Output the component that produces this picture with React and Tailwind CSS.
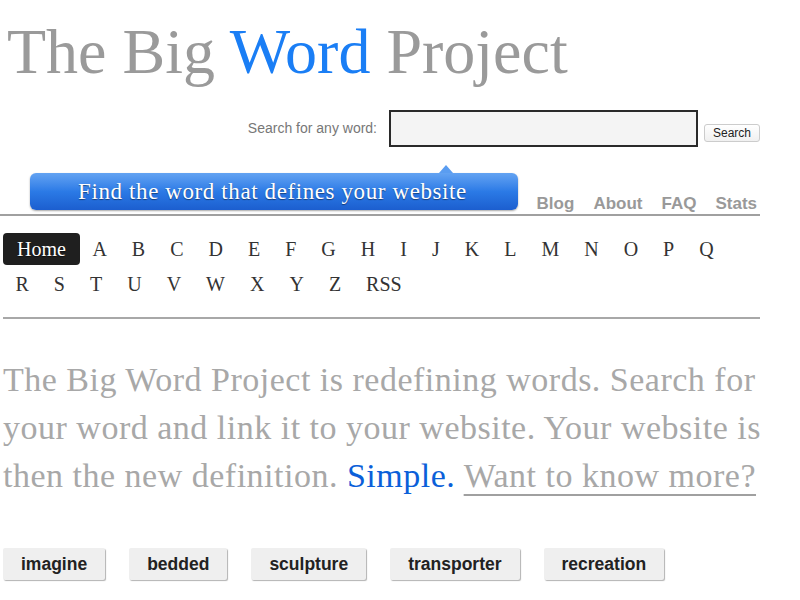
const letters1 = ['A', 'B', 'C', 'D', 'E', 'F', 'G', 'H', 'I', 'J', 'K', 'L', 'M', 'N', 'O', 'P', 'Q'];
const letters2 = ['R', 'S', 'T', 'U', 'V', 'W', 'X', 'Y', 'Z', 'RSS'];
const words = ['imagine', 'bedded', 'sculpture', 'transporter', 'recreation'];

const serif = "font-['Liberation_Serif','Times_New_Roman',serif]";
const sans = "font-['Liberation_Sans',Arial,sans-serif]";

function Letter({ children }) {
  return (
    <a href="#" className="px-[12.5px] text-[20px] leading-[32px] text-[#333]">
      {children}
    </a>
  );
}

export default function App() {
  return (
    <div className={`w-[800px] h-[600px] bg-white overflow-hidden ${serif}`}>
      <div className="w-[760px]">
        {/* logo */}
        <h1 className="pt-[20px] pl-[7px] text-[64px] leading-[64px] text-[#9a9a9a] whitespace-nowrap">
          The Big <span className="text-[#1a7ef5]">Word</span> Project
        </h1>

        {/* search */}
        <div className="mt-[26px] flex items-center justify-end">
          <span className={`${sans} text-[14px] text-[#777] mr-[12px]`}>Search for any word:</span>
          <input className="w-[309px] h-[37px] border-2 border-[#2a2a2a] bg-[#f4f4f4] outline-none" />
          <button
            className={`${sans} ml-[6px] mt-[8px] w-[56px] h-[18px] text-[12px] leading-[16px] text-[#222] border border-[#ccc] rounded-[3px] bg-linear-to-b from-white to-[#f0f0f0]`}
          >
            Search
          </button>
        </div>

        {/* banner + nav */}
        <div className="mt-[26px] flex items-end justify-between">
          <div className="relative ml-[30px] w-[488px] h-[37px] rounded-[6px] bg-linear-to-b from-[#63a3f2] via-[#2b7ae6] to-[#1c5ecf] shadow-[0_1px_2px_rgba(0,0,0,0.35)] flex items-center justify-center">
            <span className="absolute -top-[8px] left-[409px] w-0 h-0 border-x-[7px] border-x-transparent border-b-[8px] border-b-[#5a9df1]" />
            <span className="text-white text-[23px] tracking-[0.6px] leading-none [text-shadow:0_1px_1px_rgba(0,0,0,0.45)] -ml-[3px]">
              Find the word that defines your website
            </span>
          </div>
          <nav className={`${sans} flex gap-[19px] font-bold text-[17px] leading-[20px] text-[#999] pr-[3px] -mb-[4px]`}>
            <a href="#">Blog</a>
            <a href="#">About</a>
            <a href="#">FAQ</a>
            <a href="#">Stats</a>
          </nav>
        </div>
        <div className="mt-[4px] h-[2px] bg-[#a0a0a0]" />

        {/* alphabet */}
        <div className="mt-[17px] pl-[3px]">
          <div className="flex items-center h-[32px]">
            <a
              href="#"
              className="px-[14px] h-[32px] rounded-[4px] bg-[#1f1f1f] text-white text-[20px] leading-[32px] [text-shadow:0_1px_1px_rgba(0,0,0,0.6)]"
            >
              Home
            </a>
            {letters1.map((l) => (
              <Letter key={l}>{l}</Letter>
            ))}
          </div>
          <div className="flex items-center h-[32px] mt-[3px]">
            {letters2.map((l) => (
              <Letter key={l}>{l}</Letter>
            ))}
          </div>
        </div>
        <div className="mt-[17px] ml-[3px] h-[2px] bg-[#a8a8a8]" />

        {/* intro */}
        <p className="mt-[37px] pl-[3px] text-[34px] tracking-[0.5px] leading-[48px] text-[#a8a8a8] whitespace-nowrap">
          <span className="block">The Big Word Project is redefining words. Search for</span>
          <span className="block">your word and link it to your website. Your website is</span>
          <span className="block">
            then the new definition. <span className="text-[#0b5fd9]">Simple.</span>{' '}
            <a href="#" className="underline decoration-2 decoration-[#a0a0a0] underline-offset-[7px]">
              Want to know more?
            </a>
          </span>
        </p>

        {/* words */}
        <div className="mt-[48px] pl-[3px] flex gap-[24px]">
          {words.map((w) => (
            <button
              key={w}
              className={`${sans} h-[32px] px-[18px] bg-[#efefef] text-[17.5px] font-bold text-[#222] shadow-[1px_1px_1px_rgba(0,0,0,0.3)] rounded-[2px]`}
            >
              {w}
            </button>
          ))}
        </div>
      </div>
    </div>
  );
}
